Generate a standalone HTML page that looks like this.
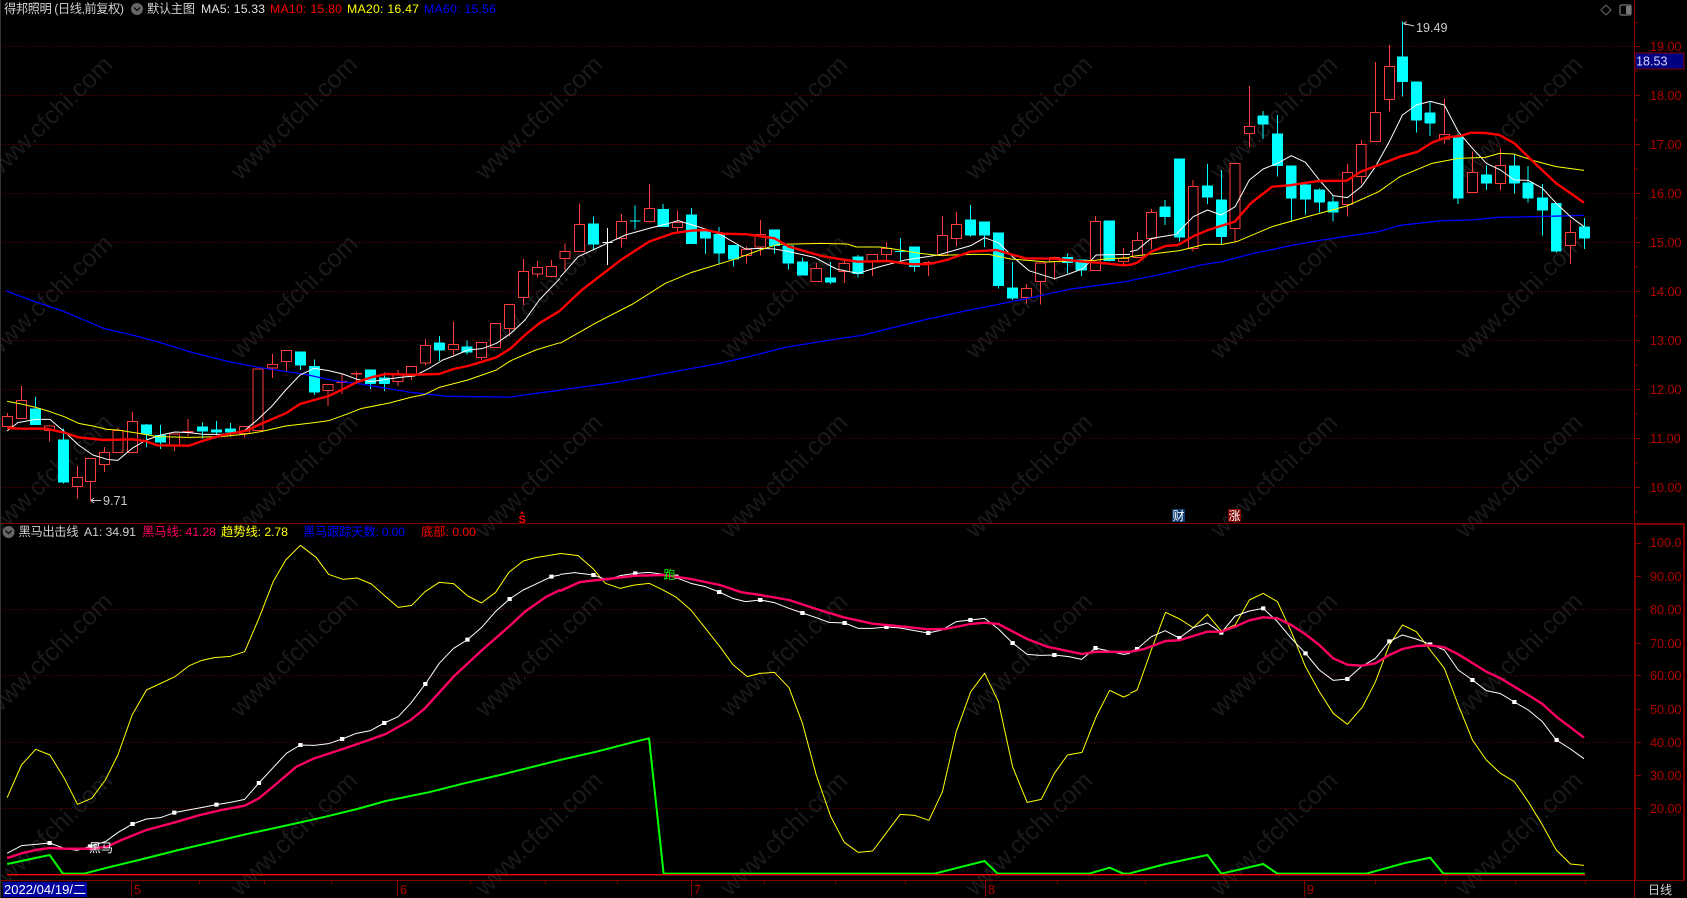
<!DOCTYPE html>
<html><head><meta charset="utf-8"><title>得邦照明</title>
<style>
html,body{margin:0;padding:0;background:#000;overflow:hidden}
svg{display:block;font-family:"Liberation Sans","Noto Sans CJK SC",sans-serif}
path,polyline{vector-effect:non-scaling-stroke;stroke-linejoin:round}
polyline{fill:none}
.r{fill:#000;stroke:#ff3c3c;stroke-width:1;shape-rendering:crispEdges}
.c{fill:#0ff;stroke:#0ff;stroke-width:1;shape-rendering:crispEdges}
.w1{stroke:#fff;stroke-width:1}
.y1{stroke:#ff0;stroke-width:1}
.b1{stroke:#0000ff;stroke-width:1.3}
.r3{stroke:#f00;stroke-width:2.4}
.p3{stroke:#ff0064;stroke-width:2.4}
.g2{stroke:#0f0;stroke-width:2}
.mk{fill:none;stroke:#fff;stroke-width:4}
.wm text{fill:#1a1a1a;font-size:25px;text-anchor:middle}
.ax text{fill:#b00000;font-size:12.6px}
.t{font-size:12.3px}
</style></head>
<body>
<svg width="1687" height="898" viewBox="0 0 1687 898" xmlns="http://www.w3.org/2000/svg">
<rect width="1687" height="898" fill="#000"/>
<!-- watermark -->
<g class="wm" transform="translate(-2,1)">
<text x="51" y="125" transform="rotate(-44 51 117)">www.cfchi.com</text><text x="296" y="125" transform="rotate(-44 296 117)">www.cfchi.com</text><text x="541" y="125" transform="rotate(-44 541 117)">www.cfchi.com</text><text x="786" y="125" transform="rotate(-44 786 117)">www.cfchi.com</text><text x="1031" y="125" transform="rotate(-44 1031 117)">www.cfchi.com</text><text x="1276" y="125" transform="rotate(-44 1276 117)">www.cfchi.com</text><text x="1521" y="125" transform="rotate(-44 1521 117)">www.cfchi.com</text>
<text x="51" y="304" transform="rotate(-44 51 296)">www.cfchi.com</text><text x="296" y="304" transform="rotate(-44 296 296)">www.cfchi.com</text><text x="541" y="304" transform="rotate(-44 541 296)">www.cfchi.com</text><text x="786" y="304" transform="rotate(-44 786 296)">www.cfchi.com</text><text x="1031" y="304" transform="rotate(-44 1031 296)">www.cfchi.com</text><text x="1276" y="304" transform="rotate(-44 1276 296)">www.cfchi.com</text><text x="1521" y="304" transform="rotate(-44 1521 296)">www.cfchi.com</text>
<text x="51" y="483" transform="rotate(-44 51 475)">www.cfchi.com</text><text x="296" y="483" transform="rotate(-44 296 475)">www.cfchi.com</text><text x="541" y="483" transform="rotate(-44 541 475)">www.cfchi.com</text><text x="786" y="483" transform="rotate(-44 786 475)">www.cfchi.com</text><text x="1031" y="483" transform="rotate(-44 1031 475)">www.cfchi.com</text><text x="1276" y="483" transform="rotate(-44 1276 475)">www.cfchi.com</text><text x="1521" y="483" transform="rotate(-44 1521 475)">www.cfchi.com</text>
<text x="51" y="662" transform="rotate(-44 51 654)">www.cfchi.com</text><text x="296" y="662" transform="rotate(-44 296 654)">www.cfchi.com</text><text x="541" y="662" transform="rotate(-44 541 654)">www.cfchi.com</text><text x="786" y="662" transform="rotate(-44 786 654)">www.cfchi.com</text><text x="1031" y="662" transform="rotate(-44 1031 654)">www.cfchi.com</text><text x="1276" y="662" transform="rotate(-44 1276 654)">www.cfchi.com</text><text x="1521" y="662" transform="rotate(-44 1521 654)">www.cfchi.com</text>
<text x="51" y="841" transform="rotate(-44 51 833)">www.cfchi.com</text><text x="296" y="841" transform="rotate(-44 296 833)">www.cfchi.com</text><text x="541" y="841" transform="rotate(-44 541 833)">www.cfchi.com</text><text x="786" y="841" transform="rotate(-44 786 833)">www.cfchi.com</text><text x="1031" y="841" transform="rotate(-44 1031 833)">www.cfchi.com</text><text x="1276" y="841" transform="rotate(-44 1276 833)">www.cfchi.com</text><text x="1521" y="841" transform="rotate(-44 1521 833)">www.cfchi.com</text>
</g>
<!-- grid -->
<g stroke="#700000" stroke-width="1" stroke-dasharray="1 2" shape-rendering="crispEdges" fill="none">
<path d="M2 46.5H1634M2 95.5H1634M2 144.5H1634M2 193.5H1634M2 242.5H1634M2 291.5H1634M2 340.5H1634M2 389.5H1634M2 438.5H1634M2 487.5H1634M2 609.5H1634M2 675.5H1634M2 742.5H1634M2 808.5H1634"/>
</g>
<!-- frame -->
<g fill="#800000" shape-rendering="crispEdges">
<rect x="0" y="0" width="1" height="898" fill="#333"/>
<rect x="1" y="523" width="1633" height="1"/>
<rect x="1634" y="0" width="1" height="524"/>
<rect x="1634" y="523" width="51" height="2"/>
<rect x="1634" y="524" width="2" height="357"/>
<rect x="1683" y="524" width="2" height="357"/>
<rect x="1" y="880" width="1684" height="1"/>
<rect x="1634" y="881" width="1" height="17"/>
</g>
<!-- axis ticks -->
<path fill="none" stroke="#800000" shape-rendering="crispEdges" d="M1635 46.5h5M1635 95.5h5M1635 144.5h5M1635 193.5h5M1635 242.5h5M1635 291.5h5M1635 340.5h5M1635 389.5h5M1635 438.5h5M1635 487.5h5M1635 22.5h3M1635 71h3M1635 120h3M1635 169h3M1635 218h3M1635 267h3M1635 316h3M1635 365h3M1635 414h3M1635 463h3M1635 512h3M1636 543.5h5M1636 576.5h5M1636 609.5h5M1636 643.5h5M1636 675.5h5M1636 709.5h5M1636 742.5h5M1636 775.5h5M1636 808.5h5M131.5 881v16M397.5 881v16M691.5 881v16M985.5 881v16M1304.5 881v16M199.5 881v3M264.5 881v3M331.5 881v3M470.5 881v3M545.5 881v3M617.5 881v3M764.5 881v3M835.5 881v3M905.5 881v3M1057.5 881v3M1145.5 881v3M1225.5 881v3M1375.5 881v3M1445.5 881v3M1515.5 881v3M1585.5 881v3"/>
<g class="ax">
<text x="1650" y="51">19.00</text><text x="1650" y="100">18.00</text><text x="1650" y="149">17.00</text><text x="1650" y="198">16.00</text><text x="1650" y="247">15.00</text><text x="1650" y="296">14.00</text><text x="1650" y="345">13.00</text><text x="1650" y="394">12.00</text><text x="1650" y="443">11.00</text><text x="1650" y="492">10.00</text>
<text x="1650" y="547">100.0</text><text x="1650" y="581">90.00</text><text x="1650" y="614">80.00</text><text x="1650" y="648">70.00</text><text x="1650" y="680">60.00</text><text x="1650" y="714">50.00</text><text x="1650" y="747">40.00</text><text x="1650" y="780">30.00</text><text x="1650" y="813">20.00</text>
<text x="134" y="894">5</text><text x="400" y="894">6</text><text x="694" y="894">7</text><text x="988" y="894">8</text><text x="1307" y="894">9</text>
</g>
<!-- price tag -->
<rect x="1635" y="53" width="49" height="16" fill="#000080" stroke="#800000"/>
<text x="1636" y="65.5" fill="#d8d8ff" font-size="12.6">18.53</text>
<!-- top-right icons -->
<path d="M1606 5l5 5-5 5-5-5z" fill="none" stroke="#666" stroke-width="1"/>
<rect x="1620" y="5" width="11" height="10" rx="1.5" fill="none" stroke="#777" stroke-width="1.2"/><rect x="1626" y="6" width="4.5" height="8" fill="#777"/>
<!-- main chart A -->
<g transform="translate(0,300) scale(.35714,.33333)">
<path class="r" d="M21 339V349M7 349h28V380h-28zM60 258V301M46 301h28V356h-28zM139 392V425M125 378h28V392h-28zM217 498V532M217 560V595M203 532h28V560h-28zM254 545V605M240 475h28V545h-28zM292 441V457M292 494V516M278 457h28V494h-28zM331 383V391M317 391h28V458h-28zM371 336V364M357 364h28V458h-28zM488 437V453M474 402h28V437h-28zM527 357V394M527 396V408M513 394h28V396h-28zM685 401V413M671 380h28V401h-28zM709 207h28V392h-28zM763 162V193M763 204V234M749 193h28V204h-28zM802 184V214M788 151h28V184h-28zM919 272V318M905 253h28V272h-28zM958 222V245M958 248V282M944 245h28V248h-28zM998 215V220M998 222V248M984 220h28V222h-28zM1115 210V225M1115 245V258M1101 225h28V245h-28zM1152 226V240M1138 199h28V226h-28zM1191 117V136M1191 189V195M1177 136h28V189h-28zM1270 64V133M1270 149V165M1256 133h28V149h-28zM1348 173V180M1334 127h28V173h-28zM1373 70h28V143h-28zM1426 86V110M1412 13h28V86h-28zM1466 -123V-86M1466 -8V15M1452 -86h28V-8h-28zM1505 -117V-97M1505 -78V-67M1491 -97h28V-78h-28zM1544 -120V-101M1544 -70V-67M1530 -101h28V-70h-28z"/>
<path class="c" d="M99 291V374M85 327h28V374h-28zM178 385V550M164 420h28V546h-28zM410 372V441M396 375h28V402h-28zM449 375V447M435 406h28V426h-28zM567 368V416M553 381h28V393h-28zM606 363V405M592 390h28V396h-28zM645 369V410M631 387h28V396h-28zM841 156V210M827 156h28V195h-28zM880 178V285M866 200h28V276h-28zM1037 210V267M1023 210h28V250h-28zM1076 218V273M1062 234h28V250h-28zM1230 108V183M1216 129h28V150h-28zM1308 121V163M1294 141h28V156h-28z"/>
<polyline class="b1" points="18,-27 85,0 180,35 290,85 370,105 440,125 540,158 640,185 740,205 850,222 940,243 1010,252 1150,277 1250,289 1330,290 1430,291 1500,280 1568,271"/>
<polyline class="w1" points="20,393 50,368 100,358 140,358 180,395 220,435 260,465 300,478 330,481 370,445 410,420 450,405 490,396 530,398 570,403 620,403 680,396 720,360 760,320 800,270 840,225 880,205 920,212 960,222 1000,238 1040,245 1080,238 1120,232 1160,228 1200,206 1240,180 1270,168 1310,150 1350,146 1390,130 1430,100 1470,60 1510,0 1568,-65"/>
<polyline class="y1" points="20,304 60,312 100,322 140,335 180,350 220,370 260,378 300,388 330,390 400,402 440,410 530,412 620,410 690,402 730,395 800,378 880,368 920,362 970,343 1010,326 1090,309 1150,292 1190,283 1230,262 1310,240 1350,225 1390,210 1430,182 1500,150 1568,128"/>
<polyline class="r3" points="20,384 60,386 130,386 180,398 220,412 290,420 370,418 410,424 440,436 530,437 570,422 620,406 690,392 730,372 800,340 840,312 880,300 920,288 960,268 1000,246 1040,232 1080,222 1150,224 1230,222 1270,207 1310,198 1350,185 1390,172 1430,145 1470,105 1510,70 1568,32"/>
</g>
<!-- main chart B -->
<g transform="translate(560,100) scale(.36352,.33333)">
<path class="r" d="M14 430V454M14 476V510M0 454h28V476h-28zM54 310V373M40 373h28V455h-28zM169 342V364M169 416V443M155 364h28V416h-28zM246 252V325M246 365V368M232 325h28V365h-28zM323 331V367M323 383V395M309 367h28V383h-28zM513 440V448M513 467V491M499 448h28V467h-28zM551 360V404M551 441V467M537 404h28V441h-28zM705 489V505M691 505h28V545h-28zM782 480V490M782 515V549M768 490h28V515h-28zM859 485V528M845 463h28V485h-28zM898 428V445M898 464V484M884 445h28V464h-28zM1014 483V488M1014 492V528M1000 488h28V492h-28zM1052 348V406M1052 466V470M1038 406h28V466h-28zM1091 336V373M1091 416V440M1077 373h28V416h-28zM1283 552V565M1283 593V610M1269 565h28V593h-28zM1322 545V614M1308 489h28V545h-28zM1360 470V472M1360 484V540M1346 472h28V484h-28zM1473 348V364M1459 364h28V512h-28zM1550 444V476M1550 485V495M1536 476h28V485h-28z"/>
<path class="c" d="M92 349V450M78 372h28V432h-28zM207 316V388M193 363h28M284 312V380M270 328h28V380h-28zM362 324V431M348 345h28V431h-28zM400 390V462M386 395h28V414h-28zM438 381V490M424 403h28V459h-28zM477 437V500M463 437h28V477h-28zM590 390V460M576 390h28V437h-28zM628 438V509M614 438h28V489h-28zM667 472V525M653 486h28V525h-28zM744 486V552M730 534h28V546h-28zM820 465V533M806 471h28V521h-28zM936 414V485M922 455h28M975 441V515M961 441h28V500h-28zM1129 315V410M1115 360h28V405h-28zM1168 366V441M1154 366h28V405h-28zM1206 399V566M1192 399h28V557h-28zM1245 486V600M1231 564h28V594h-28zM1396 460V520M1382 472h28V488h-28zM1434 480V528M1420 480h28V510h-28zM1511 363V485M1497 363h28V482h-28z"/>
<path d="M131 384V495M117 428h28" fill="none" stroke="#fff" stroke-width="1" shape-rendering="crispEdges"/>
<polyline class="b1" points="0,870 150,848 300,818 430,792 520,770 620,742 760,717 830,706 1000,660 1120,632 1210,612 1300,592 1400,568 1568,543"/>
<polyline class="w1" points="0,532 50,470 90,450 130,430 180,405 245,385 300,370 325,362 400,387 440,403 510,447 550,445 590,447 630,455 700,472 760,507 820,520 880,500 950,480 1040,465 1130,437 1168,413 1206,428 1245,470 1290,512 1360,536 1400,522 1440,505 1475,465 1568,463"/>
<polyline class="y1" points="0,730 100,668 200,612 290,550 360,518 480,478 550,450 600,433 720,430 790,432 815,441 880,441 918,447 990,460 1040,466 1140,463 1180,463 1240,477 1340,486 1400,483 1470,481 1500,477 1568,473"/>
<polyline class="r3" points="0,632 60,570 170,478 245,425 310,400 360,392 400,390 450,401 515,403 590,415 630,440 720,468 780,479 820,485 900,483 970,493 1015,492 1060,481 1130,455 1200,450 1280,475 1360,476 1430,484 1500,490 1550,496 1568,494"/>
</g>
<!-- main chart C -->
<g transform="translate(1130,0) scale(.35523,.33333)">
<path class="r" d="M21 696V721M21 772V775M7 721h28V772h-28zM60 627V637M60 715V747M46 637h28V715h-28zM178 540V559M178 745V755M164 559h28V745h-28zM296 685V725M282 490h28V685h-28zM336 258V379M336 400V443M322 379h28V400h-28zM612 492V517M612 613V650M598 517h28V613h-28zM651 420V433M651 529V550M637 433h28V529h-28zM691 186V337M677 337h28V425h-28zM730 135V199M730 298V335M716 199h28V298h-28zM885 295V403M885 417V430M871 403h28V417h-28zM964 455V517M950 517h28V578h-28zM1043 445V496M1043 551V572M1029 496h28V551h-28zM1240 660V697M1240 737V792M1226 697h28V737h-28z"/>
<path class="c" d="M99 600V675M85 621h28V650h-28zM139 477V725M125 477h28V711h-28zM218 492V612M204 558h28V591h-28zM257 510V733M243 600h28V710h-28zM375 333V417M361 348h28V372h-28zM415 345V530M401 402h28V497h-28zM454 498V665M440 498h28V594h-28zM494 545V643M480 555h28V597h-28zM533 566V637M519 570h28V606h-28zM572 586V665M558 606h28V636h-28zM767 65V290M753 171h28V245h-28zM806 246V398M792 246h28V360h-28zM845 305V408M831 339h28V369h-28zM924 400V612M910 412h28V594h-28zM1003 497V570M989 525h28V549h-28zM1082 465V580M1068 498h28V549h-28zM1121 498V608M1107 549h28V594h-28zM1161 552V707M1147 594h28V630h-28zM1200 611V758M1186 611h28V753h-28zM1279 654V747M1265 681h28V714h-28z"/>
<polyline class="b1" points="0,842 100,820 200,795 260,785 340,762 460,735 540,720 700,695 760,676 880,662 960,660 1040,652 1140,650 1278,646"/>
<polyline class="w1" points="0,755 20,750 60,715 130,703 178,650 218,630 257,645 296,620 336,540 375,507 415,490 454,467 494,487 533,540 572,587 612,593 651,560 691,500 730,425 767,345 806,315 845,304 885,315 924,395 964,445 1003,490 1043,510 1082,540 1121,541 1161,565 1200,610 1240,650 1278,680"/>
<polyline class="y1" points="0,770 60,762 140,752 210,733 260,733 300,725 400,680 500,650 610,618 700,575 760,530 850,490 924,475 1000,472 1040,460 1080,462 1140,483 1200,500 1278,511"/>
<polyline class="r3" points="0,795 20,788 60,755 100,738 135,735 180,708 220,690 295,665 340,610 400,560 450,556 530,543 610,542 650,515 700,495 760,470 810,455 850,428 890,412 930,408 960,398 1000,399 1040,405 1082,430 1140,490 1200,550 1278,608"/>
</g>
<!-- price marks -->
<path d="M1403.5 23.5l10.5 2.5M1403.5 23.5l3-2M1403.5 23.5l3 1.5" fill="none" stroke="#ccc"/>
<text x="1416" y="32" fill="#ccc" font-size="12.6">19.49</text>
<path d="M91 500.5h10M91 500.5l3-2.5M91 500.5l3 2.5" fill="none" stroke="#ccc"/>
<text x="103" y="505" fill="#ccc" font-size="12.6">9.71</text>
<path d="M522 511l-2 2.5h4z" fill="#f00"/>
<text x="518.5" y="523" fill="#f00" font-size="11" font-weight="bold">S</text>
<rect x="1172" y="509" width="13" height="13" fill="#0a3a70"/><text x="1172.5" y="520" fill="#fff" font-size="12">财</text>
<rect x="1228" y="509" width="13" height="13" fill="#800000"/><text x="1228.5" y="520" fill="#fff" font-size="12">涨</text>
<!-- lower A -->
<g transform="translate(0,535) scale(.35714,.33333)">
<polyline class="y1" points="20,788 60,690 100,643 140,660 180,730 217,808 257,790 295,735 330,660 370,540 410,465 490,425 530,392 565,376 600,368 645,364 685,350 725,250 765,140 800,75 841,31 885,67 920,118 960,133 1000,129 1040,147 1080,185 1115,217 1153,211 1190,170 1230,142 1270,146 1310,183 1348,204 1388,172 1425,112 1465,78 1500,68 1568,56"/>
<polyline class="w1" points="20,955 60,932 100,928 139,924 180,940 217,946 257,932 295,920 331,892 371,867 410,852 449,848 488,833 527,825 567,817 606,809 645,802 685,793 725,744 763,700 802,655 841,630 880,631 920,626 958,612 998,595 1037,587 1076,564 1115,545 1150,505 1191,447 1230,385 1270,340 1309,314 1348,278 1387,230 1427,192 1465,165 1505,145 1544,125 1568,120"/>
<path class="mk" d="M133 924h12M246 934h12M365 867h12M482 833h12M600 809h12M719 744h12M835 630h12M952 612h12M1070 564h12M1185 447h12M1303 314h12M1421 192h12M1538 125h12"/>
<polyline class="g2" points="20,987 139,960 176,1016 235,1016 300,998 400,972 500,945 600,920 700,895 800,872 900,848 1000,822 1080,798 1200,772 1300,745 1400,720 1568,675"/>
<polyline class="p3" points="20,969 60,955 100,945 140,939 180,941 257,941 300,935 340,915 410,885 490,862 560,840 620,825 685,812 725,790 770,750 830,695 880,670 960,642 1020,620 1080,597 1150,555 1190,520 1270,425 1350,345 1430,270 1470,230 1530,185 1568,165"/>
</g>
<!-- lower B -->
<g transform="translate(560,535) scale(.36352,.33333)">
<polyline class="y1" points="0,55 50,62 90,100 125,145 165,160 205,150 245,145 280,163 320,187 360,225 400,280 440,335 475,388 515,425 550,415 590,412 630,458 667,565 705,720 745,845 782,922 820,952 860,948 898,893 936,838 975,841 1015,856 1052,770 1090,590 1130,470 1168,415 1206,500 1245,695 1285,802 1324,793 1360,715 1396,660 1436,652 1475,545 1512,466 1550,486 1568,478"/>
<polyline class="w1" points="0,118 40,113 92,120 130,135 165,122 207,115 245,112 285,118 320,128 360,145 400,155 438,171 475,190 510,200 551,195 590,203 630,220 667,234 705,248 740,262 783,264 820,280 860,280 898,276 936,279 975,287 1013,294 1050,285 1090,260 1129,255 1168,250 1206,282 1245,324 1285,358 1320,361 1360,360 1400,365 1435,373 1473,339 1510,348 1550,358 1568,355"/>
<path class="mk" d="M86 120h12M201 115h12M314 125h12M432 171h12M545 195h12M661 234h12M777 264h12M892 276h12M1007 294h12M1123 255h12M1239 324h12M1354 360h12M1467 339h12"/>
<polyline class="g2" points="0,675 100,650 200,622 245,610 285,1016 1030,1016 1168,978 1204,1016 1455,1016 1512,998 1550,1016 1568,1016"/>
<polyline class="p3" points="0,168 55,141 130,132 207,122 285,120 360,132 440,150 500,172 551,180 630,195 705,222 780,247 860,266 936,274 1013,283 1060,282 1129,267 1168,263 1206,267 1285,312 1340,335 1436,357 1475,350 1568,351"/>
</g>
<!-- lower C -->
<g transform="translate(1130,535) scale(.35523,.33333)">
<polyline class="y1" points="0,475 20,465 60,345 100,232 140,252 178,278 218,238 257,288 296,270 336,195 375,175 415,200 454,290 494,395 533,470 572,535 612,568 655,515 691,440 730,330 767,270 806,290 845,345 885,400 924,510 964,615 1003,675 1043,715 1082,740 1121,800 1161,870 1200,945 1240,987 1278,991"/>
<polyline class="w1" points="0,350 20,342 60,305 99,287 139,309 178,278 218,264 257,293 296,243 336,228 375,220 415,260 454,310 494,355 533,405 572,436 612,432 651,395 691,370 730,319 767,300 806,312 845,328 885,345 924,405 964,435 1003,467 1043,476 1082,501 1121,525 1161,560 1200,615 1240,642 1278,671"/>
<path class="mk" d="M14 342h12M133 309h12M251 293h12M369 220h12M488 355h12M606 432h12M724 319h12M839 328h12M958 435h12M1076 501h12M1195 615h12"/>
<polyline class="g2" points="0,1015 100,987 218,960 257,1016 375,987 415,1016 665,1016 770,985 845,968 882,1016 1280,1016"/>
<polyline class="p3" points="0,351 40,342 100,318 139,316 178,303 218,290 257,290 296,275 336,256 375,247 415,250 454,270 494,298 533,330 572,370 612,389 651,392 691,385 730,360 767,342 806,333 845,331 885,337 924,358 964,384 1003,410 1043,430 1082,455 1121,480 1161,507 1200,545 1240,577 1278,608"/>
</g>
<rect x="7" y="874" width="1578" height="1.4" fill="#f00"/>
<text x="89" y="852" fill="#fff" font-size="12">黑马</text>
<text x="663.5" y="579" fill="#0f0" font-size="12">跑</text>
<!-- header 1 -->
<text class="t" x="4" y="13" fill="#d0d0d0" textLength="120" lengthAdjust="spacing">得邦照明 (日线,前复权)</text>
<circle cx="137" cy="9" r="6" fill="#666"/><path d="M134 7.5l3 3 3-3" fill="none" stroke="#111" stroke-width="1.4"/>
<text class="t" x="147" y="13" fill="#d0d0d0" textLength="48" lengthAdjust="spacing">默认主图</text>
<text class="t" x="201" y="13" fill="#e0e0e0" textLength="64" lengthAdjust="spacing">MA5: 15.33</text>
<text class="t" x="270" y="13" fill="#f00" textLength="72" lengthAdjust="spacing">MA10: 15.80</text>
<text class="t" x="347" y="13" fill="#ff0" textLength="72" lengthAdjust="spacing">MA20: 16.47</text>
<text class="t" x="424" y="13" fill="#00f" textLength="72" lengthAdjust="spacing">MA60: 15.56</text>
<!-- header 2 -->
<circle cx="8.6" cy="532" r="6" fill="#666"/><path d="M5.6 530.5l3 3 3-3" fill="none" stroke="#111" stroke-width="1.4"/>
<text class="t" x="18.5" y="536" fill="#d0d0d0" textLength="60" lengthAdjust="spacing">黑马出击线</text>
<text class="t" x="84" y="536" fill="#d0d0d0" textLength="52" lengthAdjust="spacing">A1: 34.91</text>
<text class="t" x="142" y="536" fill="#ff0064" textLength="74" lengthAdjust="spacing">黑马线: 41.28</text>
<text class="t" x="221" y="536" fill="#ff0" textLength="67" lengthAdjust="spacing">趋势线: 2.78</text>
<text class="t" x="303" y="536" fill="#00f" textLength="102" lengthAdjust="spacing">黑马跟踪天数: 0.00</text>
<text class="t" x="421" y="536" fill="#f00" textLength="55" lengthAdjust="spacing">底部: 0.00</text>
<!-- bottom -->
<rect x="3" y="882" width="84" height="15" fill="#0000a0"/>
<text x="4" y="894" fill="#fff" font-size="13" textLength="82" lengthAdjust="spacing">2022/04/19/二</text>
<text x="1648" y="894" fill="#d0d0d0" font-size="12">日线</text>
</svg>
</body></html>
